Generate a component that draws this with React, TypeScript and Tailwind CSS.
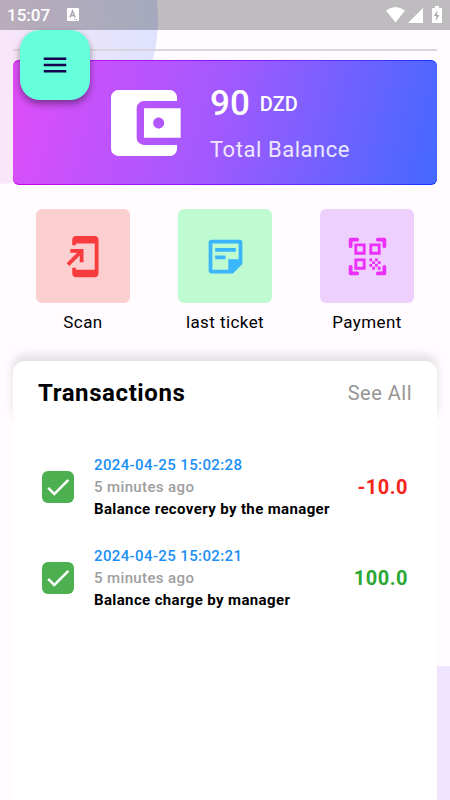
import { clsx } from "clsx";
import { MdAccountBalanceWallet, MdAddToHomeScreen, MdCheck, MdMenu } from "react-icons/md";

const transactions = [
    { date: "2024-04-25 15:02:28", ago: "5 minutes ago", label: "Balance recovery by the manager", amount: "-10.0" },
    { date: "2024-04-25 15:02:21", ago: "5 minutes ago", label: "Balance charge by manager", amount: "100.0" },
];

function NoteIcon() {
    return (
        <svg width="45" height="45" viewBox="0 0 24 24" fill="currentColor" aria-hidden="true">
            <path
                fillRule="evenodd"
                d="M4.500 3h15A1.500 1.500 0 0 1 21 4.500V16l-5 5H4.500A1.500 1.500 0 0 1 3 19.500v-15A1.500 1.500 0 0 1 4.500 3zM5 5v14h8.500v-5.500H19V5H5z"
            />
            <path d="M6.500 7.500h11v2h-11zM6.500 11.500h5.500v2H6.500z" />
        </svg>
    );
}

function QrIcon() {
    return (
        <svg width="45" height="45" viewBox="0 0 24 24" fill="currentColor" aria-hidden="true">
            <path d="M2 6.500V3a1 1 0 0 1 1-1h3.500a.9.9 0 0 1 0 2H4v2.500a1 1 0 0 1-2 0zM17.500 2H21a1 1 0 0 1 1 1v3.500a1 1 0 0 1-2 0V4h-2.500a1 1 0 0 1 0-2zM22 17.500V21a1 1 0 0 1-1 1h-3.500a1 1 0 0 1 0-2H20v-2.500a1 1 0 0 1 2 0zM6.500 22H3a1 1 0 0 1-1-1v-3.500a1 1 0 0 1 2 0V20h2.500a1 1 0 0 1 0 2z" />
            <path
                fillRule="evenodd"
                d="M5 5h6v6H5zm1.500 1.500v3h3v-3zM13 5h6v6h-6zm1.500 1.500v3h3v-3zM5 13h6v6H5zm1.500 1.500v3h3v-3z"
            />
            <path d="M13 13h1.500v1.500H13zM14.500 14.500H16V16h-1.500zM16 13h1.500v1.500H16zM13 16h1.500v1.500H13zM14.500 17.500H16V19h-1.500zM16 16h1.500v1.500H16zM17.500 14.500H19V16h-1.500zM17.500 17.500H19V19h-1.500z" />
        </svg>
    );
}

const actions = [
    { label: "Scan", color: "bg-[#fbcfcf] text-[#f83b3e]", icon: <MdAddToHomeScreen size={45} /> },
    { label: "last ticket", color: "bg-[#bffbd0] text-[#3bb5fb]", icon: <NoteIcon /> },
    { label: "Payment", color: "bg-[#eed0fe] text-[#ed2ffa]", icon: <QrIcon /> },
];

function StatusBar() {
    return (
        <header className="relative flex h-[30px] items-center bg-black/25 px-[7px] text-white">
            <span className="text-[17px] leading-none font-medium">15:07</span>
            <svg className="ml-4" width="13" height="14" viewBox="0 0 13 14" aria-hidden="true">
                <rect x="1" y="0" width="12" height="13" rx="1" fill="white" />
                <path d="M4 9.500 6.500 3 9 9.500M5 7.500h3" fill="none" stroke="#aaa4b4" strokeWidth="1.400" />
                <path d="M8 11.500h1m1 0h1" stroke="#aaa4b4" />
            </svg>
            <svg className="ml-auto" width="58" height="18" viewBox="0 0 58 18" fill="white" aria-hidden="true">
                <path d="M1 4.500Q10.500-2.500 20 4.500L10.500 16.500z" />
                <path d="M23 17 38 2v15z" />
                <path d="M50 0h4v2h3v15H47V2h3z" />
                <path d="M52.500 4 49 10h2.500l-1 5 4-6H52z" fill="#aaa" />
            </svg>
        </header>
    );
}

function BalanceCard() {
    return (
        <section className="rounded-md bg-linear-to-r from-[#c800e8] via-[#8a10ff] to-[#0033ff] py-px">
            <div className="flex h-[123px] items-center rounded-md bg-linear-[105deg,#df4df8,#a259ff_48%,#4369ff] pl-[87px] text-white">
                <MdAccountBalanceWallet size={88} />
                <div className="ml-[22px] pt-[5px]">
                    <p className="flex items-center gap-2.5 leading-10 font-medium">
                        <span className="text-[35px]">90</span>
                        <span className="text-xl">DZD</span>
                    </p>
                    <p className="mt-2.5 text-[22px] leading-8 tracking-wide text-white/85">Total Balance</p>
                </div>
            </div>
        </section>
    );
}

export default function App() {
    return (
        <div className="relative flex min-h-screen flex-col overflow-hidden bg-[#fffbff] font-[Roboto,sans-serif] text-black">
            {/* background blobs */}
            <div className="absolute -top-[144px] -left-[170px] size-[328px] rounded-full bg-linear-[75deg,#f9e6f8_50%,#dbe2ff_92%]" />
            <div className="absolute top-[666px] right-0 bottom-0 w-10 bg-[#efe5ff]" />

            <StatusBar />

            <main className="relative flex grow flex-col px-[13px]">
                <button
                    type="button"
                    aria-label="Menu"
                    className="absolute top-0 left-5 z-10 flex size-[70px] items-center justify-center rounded-[20px] bg-[#66ffdb] text-[#150050] shadow-[0_4px_7px_rgba(0,0,0,0.4)]"
                >
                    <MdMenu size={30} />
                </button>

                <hr className="mt-[19px] mb-[9px] border-t-2 border-[#d8d5dc]" />

                <BalanceCard />

                <nav className="mt-6 flex justify-between px-[23px]">
                    {actions.map((action) => (
                        <button key={action.label} type="button" className="flex w-[94px] flex-col items-center">
                            <span className={clsx("flex h-[94px] w-full items-center justify-center rounded-md", action.color)}>
                                {action.icon}
                            </span>
                            <span className="mt-1.5 text-[17px] leading-[26px] tracking-wide whitespace-nowrap">{action.label}</span>
                        </button>
                    ))}
                </nav>

                <section className="mt-[26px] flex grow flex-col rounded-t-xl bg-white">
                    <div className="flex h-[63px] items-center justify-between rounded-xl bg-white px-[25px] shadow-[0_-6px_10px_rgba(0,0,0,0.12)]">
                        <h1 className="text-2xl font-bold tracking-wide">Transactions</h1>
                        <a href="#transactions" className="text-xl tracking-wide text-[#969696]">See All</a>
                    </div>

                    <ul id="transactions" className="relative grow bg-white px-[29px] pt-[30px]">
                        {transactions.map((item) => (
                            <li key={item.date} className="mb-[25px] flex items-center">
                                <span className="flex size-8 items-center justify-center rounded-md bg-[#4caf50] text-white">
                                    <MdCheck size={30} />
                                </span>
                                <div className="ml-5 text-[15px] leading-[22px] font-medium tracking-wide">
                                    <p className="text-[#1c8ff5]">{item.date}</p>
                                    <p className="text-[#9e9e9e]">{item.ago}</p>
                                    <p className="font-bold">{item.label}</p>
                                </div>
                                <span
                                    className={clsx(
                                        "ml-auto text-xl font-bold tracking-wide",
                                        item.amount.startsWith("-") ? "text-[#f5241c]" : "text-[#2ca836]"
                                    )}
                                >
                                    {item.amount}
                                </span>
                            </li>
                        ))}
                    </ul>
                </section>
            </main>
        </div>
    );
}
